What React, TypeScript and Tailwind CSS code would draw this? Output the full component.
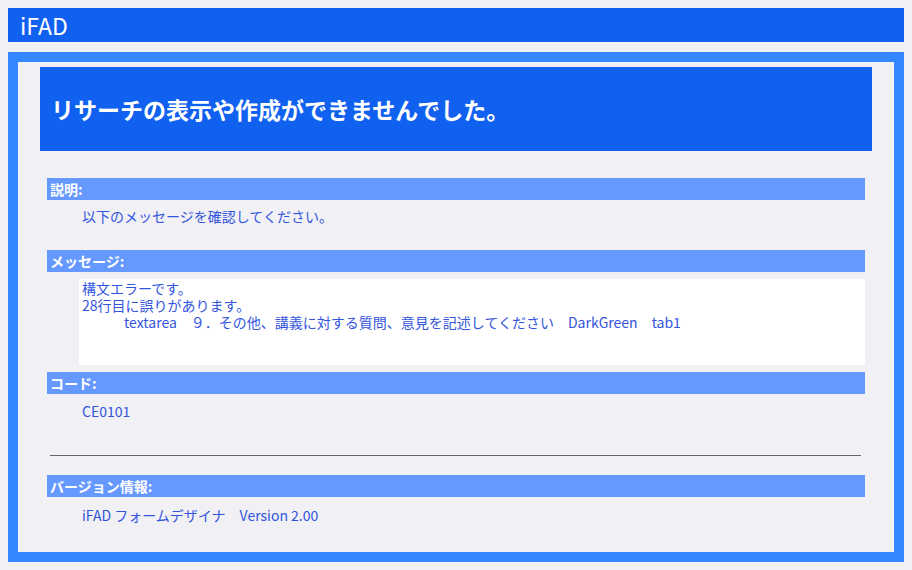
export default function App() {
  const font = { fontFamily: '"Noto Sans CJK JP", "Noto Sans", sans-serif' };

  return (
    <div className="min-h-screen bg-[#f0f0f5] p-2" style={font}>
      {/* Top bar */}
      <div className="h-[34px] bg-[#1161f0] pl-3 text-[23px] leading-[34px] text-white">
        iFAD
      </div>

      {/* Frame */}
      <div className="mt-[10px] h-[510px] border-[10px] border-[#3388ff] px-[22px] pt-[5px]">
        <div className="flex h-[84px] items-center bg-[#1161f0] pl-[11px] text-[23px] font-bold text-white">
          リサーチの表示や作成ができませんでした。
        </div>

        <div className="mt-[27px] px-[7px] text-[14px] text-[#3355dd]">
          <SectionHeader label="説明:" />
          <div className="h-[50px] pl-[35px] pt-[8px] leading-[17px]">
            以下のメッセージを確認してください。
          </div>

          <SectionHeader label="メッセージ:" />
          <div className="ml-[32px] mt-[7px] flex h-[86px] flex-col bg-white px-[3px] pt-[1px] leading-[17px]">
            <div>構文エラーです。</div>
            <div>28行目に誤りがあります。</div>
            <div className="pl-[42px]">
              textarea　９．その他、講義に対する質問、意見を記述してください　DarkGreen　tab1
            </div>
          </div>

          <div className="mt-[7px]">
            <SectionHeader label="コード:" />
          </div>
          <div className="h-[61px] pl-[35px] pt-[9px] leading-[17px]">CE0101</div>

          <div className="ml-[3px] mr-[4px] h-px bg-[#666666]" />

          <div className="mt-[19px]">
            <SectionHeader label="バージョン情報:" />
          </div>
          <div className="pl-[35px] pt-[10px] leading-[17px]">
            iFAD フォームデザイナ　Version 2.00
          </div>
        </div>
      </div>
    </div>
  );
}

function SectionHeader({ label }: { label: string }) {
  return (
    <div className="h-[22px] bg-[#6699ff] pl-[3px] text-[14px] font-bold leading-[22px] text-white">
      {label}
    </div>
  );
}
